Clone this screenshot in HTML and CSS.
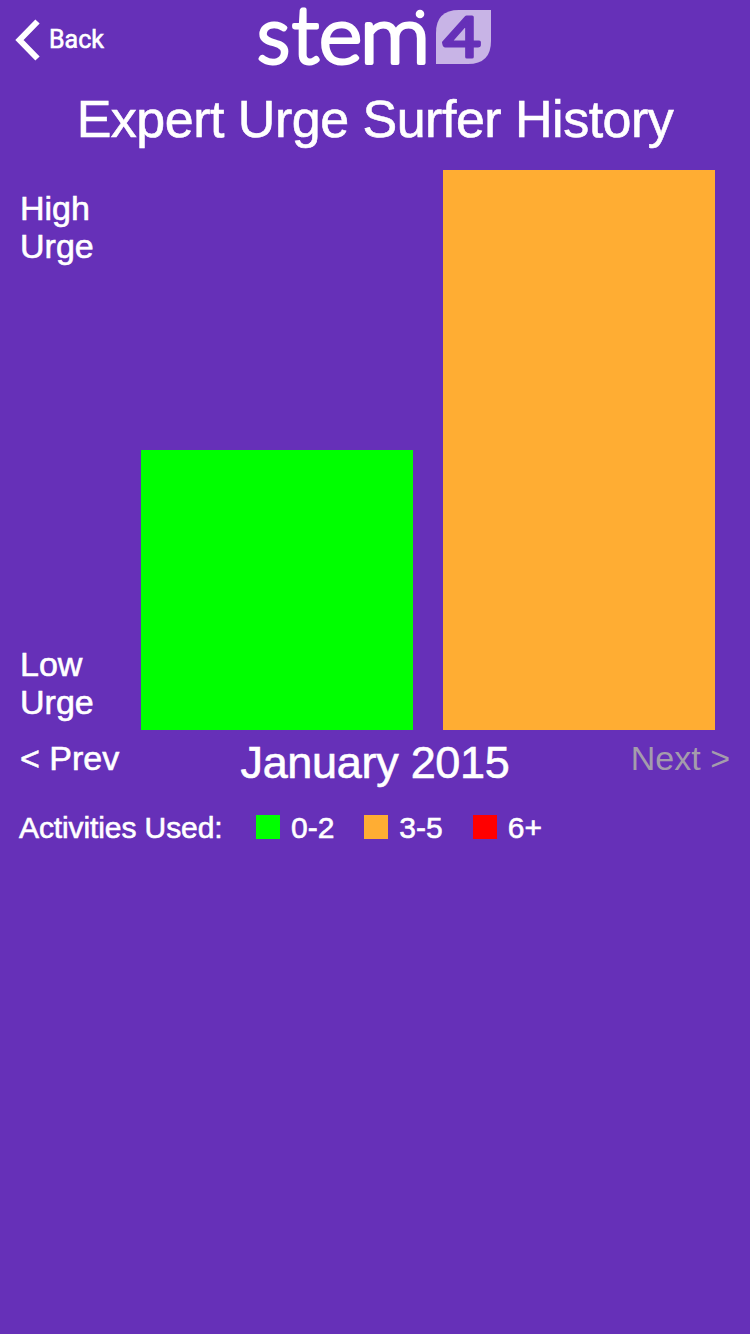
FILE: index.html
```html
<!DOCTYPE html>
<html lang="en">
<head>
<meta charset="utf-8">
<title>Expert Urge Surfer History</title>
<link rel="stylesheet" href="styles.css">
</head>
<body>
<header class="topbar">
  <a class="back">
    <svg class="back-icon" width="26" height="42" viewBox="0 0 26 42"><path d="M22.500 2.500L4.500 21L22.500 39.500" fill="none" stroke="#fff" stroke-width="6"/></svg>
    <span>Back</span>
  </a>
  <svg class="logo" width="240" height="76" viewBox="255 0 240 76" role="img" aria-label="stem4">
    <g class="wordmark">
      <text x="257" y="63" textLength="33" lengthAdjust="spacingAndGlyphs">s</text>
      <text x="292" y="63" textLength="27" lengthAdjust="spacingAndGlyphs">t</text>
      <text x="319" y="63" textLength="43" lengthAdjust="spacingAndGlyphs">e</text>
      <text x="360" y="63" textLength="70" lengthAdjust="spacingAndGlyphs">m</text>
    </g>
    <circle cx="420" cy="14" r="4.300" fill="#fff"/>
    <path d="M436 64V33Q436 10 459 10H491V41Q491 64 468 64Z" fill="#c8b4e6"/>
    <text class="four" x="443" y="56.500" textLength="38" lengthAdjust="spacingAndGlyphs">4</text>
  </svg>
</header>
<main>
  <h1 class="title">Expert Urge Surfer History</h1>
  <section class="chart">
    <div class="axis"><span>High<br>Urge</span><span>Low<br>Urge</span></div>
    <div class="bars">
      <div class="bar low" style="height:280px"></div>
      <div class="bar mid" style="height:560px"></div>
    </div>
  </section>
  <nav class="pager">
    <a class="step">&lt; Prev</a>
    <h2 class="month">January 2015</h2>
    <a class="step next">Next &gt;</a>
  </nav>
  <div class="legend">
    <span class="legend-title">Activities Used:</span>
    <span class="key"><i class="swatch low"></i>0-2</span>
    <span class="key"><i class="swatch mid"></i>3-5</span>
    <span class="key"><i class="swatch high"></i>6+</span>
  </div>
</main>
</body>
</html>
```
FILE: styles.css
```css
* { box-sizing: border-box; }
body {
  margin: 0;
  min-height: 1334px;
  background: #6630b8;
  color: #fff;
  font-family: "Liberation Sans", Arial, sans-serif;
  -webkit-text-stroke: 0.6px currentColor;
}
.topbar {
  display: grid;
  grid-template-columns: 255px 240px 1fr;
  height: 80px;
}
.back {
  display: flex;
  align-items: center;
  gap: 8px;
  padding: 0 0 1px 15px;
  font: 25px Roboto, sans-serif;
}
.logo { display: block; overflow: visible; }
.wordmark text {
  font: 300 78px Lato, sans-serif;
  fill: #fff;
  stroke: #fff;
  stroke-width: 4px;
  stroke-linejoin: round;
}
.four {
  font: 400 56px Lato, sans-serif;
  fill: #6630b8;
  stroke: #6630b8;
  stroke-width: 3px;
  stroke-linejoin: round;
}
.title {
  height: 90px;
  margin: 0;
  padding-top: 9px;
  text-align: center;
  font-size: 52px;
  font-weight: 400;
  line-height: 60px;
  letter-spacing: -0.5px;
}
.chart {
  display: grid;
  grid-template-columns: 141px 574px;
  height: 560px;
}
.axis {
  display: flex;
  flex-direction: column;
  justify-content: space-between;
  padding: 19px 0 9px 20px;
  font-size: 34px;
  line-height: 38px;
}
.bars {
  display: grid;
  grid-template-columns: 1fr 1fr;
  gap: 30px;
  align-items: end;
}
.low { background: #00ff00; }
.mid { background: #ffad33; }
.high { background: #ff0000; }
.pager {
  display: grid;
  grid-template-columns: 1fr auto 1fr;
  height: 72px;
  padding: 8px 20px 0;
}
.step { font-size: 34px; line-height: 40px; }
.next {
  color: #a49cac;
  text-align: right;
  -webkit-text-stroke-width: 0;
}
.month {
  margin: 0;
  padding-top: 1px;
  font-size: 45px;
  font-weight: 400;
  line-height: 48px;
  letter-spacing: -0.3px;
}
.legend {
  display: flex;
  align-items: center;
  height: 50px;
  padding-left: 19px;
  font-size: 30px;
}
.legend-title { width: 237px; padding-top: 2px; letter-spacing: -0.1px; }
.key {
  display: flex;
  align-items: center;
  gap: 11px;
  margin-right: 30px;
  padding-top: 1px;
}
.swatch { width: 24px; height: 24px; margin-top: -2px; }
```
